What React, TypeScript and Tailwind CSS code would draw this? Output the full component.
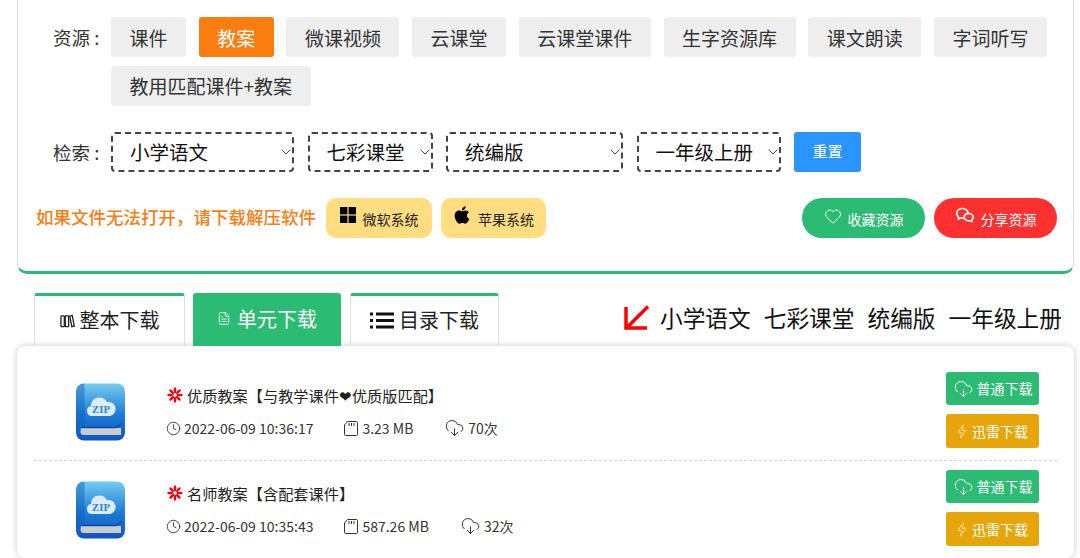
import { ChevronDown, Clock, CloudDownload, FileText, Heart } from "lucide-react"
import { FaApple } from "react-icons/fa"
import { RiWechatLine } from "react-icons/ri"

const sources = ["课件", "教案", "微课视频", "云课堂", "云课堂课件", "生字资源库", "课文朗读", "字词听写", "教用匹配课件+教案"]

const filters = [
  { value: "小学语文", width: "w-[183px]" },
  { value: "七彩课堂", width: "w-[125px]" },
  { value: "统编版", width: "w-[177px]" },
  { value: "一年级上册", width: "w-[144px]" },
]

const files = [
  { title: "优质教案【与教学课件❤\uFE0E优质版匹配】", time: "2022-06-09 10:36:17", size: "3.23 MB", count: "70次" },
  { title: "名师教案【含配套课件】", time: "2022-06-09 10:35:43", size: "587.26 MB", count: "32次" },
]

function WindowsIcon() {
  return (
    <svg viewBox="0 0 16 16" className="-mt-[5px] h-4 w-4 fill-black">
      <rect x="0" y="0" width="7.4" height="7.4" />
      <rect x="8.6" y="0" width="7.4" height="7.4" />
      <rect x="0" y="8.6" width="7.4" height="7.4" />
      <rect x="8.6" y="8.6" width="7.4" height="7.4" />
    </svg>
  )
}

function BooksIcon() {
  return (
    <svg viewBox="0 0 16 16" className="h-[15px] w-[15px] fill-none stroke-[#222]" strokeWidth="1.4">
      <rect x="1" y="3" width="3.6" height="11.5" rx="0.6" />
      <rect x="5.6" y="3" width="3.6" height="11.5" rx="0.6" />
      <path d="M10.4 3.4l2.6-.8 2.2 11.2-2.6.7z" />
    </svg>
  )
}

function ListIcon() {
  return (
    <svg viewBox="0 0 24 17" className="h-[17px] w-[24px] fill-[#111]">
      <rect x="0" y="0.5" width="3" height="3" />
      <rect x="0" y="7" width="3" height="3" />
      <rect x="0" y="13.5" width="3" height="3" />
      <rect x="6" y="0.5" width="18" height="3" />
      <rect x="6" y="7" width="18" height="3" />
      <rect x="6" y="13.5" width="18" height="3" />
    </svg>
  )
}

function SdCardIcon() {
  return (
    <svg viewBox="0 0 14 15" className="h-[15px] w-[14px] fill-none stroke-[#333]" strokeWidth="1">
      <path d="M3.5 .5h9a1 1 0 0 1 1 1v12a1 1 0 0 1-1 1h-11a1 1 0 0 1-1-1V4z" />
      <path d="M5 2v3M7.5 2v3M10 2v3" />
    </svg>
  )
}

function BoltIcon() {
  return (
    <svg viewBox="0 0 10 15" className="h-[15px] w-[10px] fill-none stroke-[#f6dc9b]" strokeWidth="1">
      <path d="M6.2 .8L1 8.4h3.6l-1 5.8L9 6.200H5.400z" strokeLinejoin="round" />
    </svg>
  )
}

function RedFlower() {
  return (
    <svg viewBox="0 0 16 16" className="h-4 w-4 shrink-0 fill-[#f5000f]">
      {[0, 45, 90, 135, 180, 225, 270, 315].map((deg) => (
        <ellipse key={deg} cx="8" cy="3.3" rx="1.3" ry="3.1" transform={`rotate(${deg} 8 8)`} />
      ))}
    </svg>
  )
}

function ZipBook() {
  return (
    <svg viewBox="0 0 49 58" className="h-[58px] w-[49px] shrink-0">
      <defs>
        <linearGradient id="zipCover" x1="0" y1="0" x2="0" y2="1">
          <stop offset="0" stopColor="#74ccf0" />
          <stop offset="0.55" stopColor="#1c7ad6" />
          <stop offset="1" stopColor="#0f56c0" />
        </linearGradient>
      </defs>
      <rect x="0" y="0.5" width="49" height="57" rx="8" fill="url(#zipCover)" />
      <path d="M8.5 .5h-.5a8 8 0 0 0-8 8v38h8.5z" fill="#0d5fb8" opacity="0.45" />
      <path d="M6 45h39v7H8c-2.5 0-3.5-1-3.5-3.5s.5-3.5 1.5-3.5z" fill="#c9cbce" />
      <path d="M6 44.5h34l6-4" fill="none" stroke="#0b49a8" strokeWidth="1.5" />
      <path d="M16 33a5 5 0 0 1-1-9.900 8.500 8.500 0 0 1 16-4 6.500 6.500 0 0 1 3 13.900z" fill="#dcecf8" />
      <text x="25" y="30" textAnchor="middle" fill="#2f86d8" fontSize="11" fontWeight="700" fontFamily="'Liberation Serif', serif">
        ZIP
      </text>
    </svg>
  )
}

function FileRow({ title, time, size, count }: (typeof files)[number]) {
  return (
    <div className="flex items-center border-b border-dashed border-[#d4d4d4] pb-[12px] pt-[9px] last:border-b-0">
      <div className="ml-[42px] mr-[41px] pt-[3px]">
        <ZipBook />
      </div>
      <div className="flex-1 pt-[3px] text-[#222]">
        <div className="flex items-center gap-[4px] pl-[1px] text-[15.2px] leading-[20px]">
          <RedFlower />
          <span>{title}</span>
        </div>
        <div className="mt-[13px] flex items-center gap-[31px] text-[14px] leading-[20px] text-[#333]">
          <span className="flex items-center gap-[3px]">
            <Clock className="h-[15px] w-[15px]" strokeWidth={1.4} />
            {time}
          </span>
          <span className="flex items-center gap-[4px]">
            <SdCardIcon />
            {size}
          </span>
          <span className="flex items-center gap-[3px]">
            <CloudDownload className="h-[20px] w-[21px]" strokeWidth={1.2} />
            {count}
          </span>
        </div>
      </div>
      <div className="mr-[18px] flex w-[93px] flex-col gap-[9px] text-[14px] text-white">
        <button type="button" className="flex h-[33px] items-center justify-center gap-[3px] rounded-[3px] bg-[#2bbb73]">
          <CloudDownload className="h-[20px] w-[21px]" strokeWidth={1.2} />
          普通下载
        </button>
        <button type="button" className="flex h-[34px] items-center justify-center gap-[5px] rounded-[3px] bg-[#e6a609]">
          <BoltIcon />
          迅雷下载
        </button>
      </div>
    </div>
  )
}

export default function App() {
  return (
    <div className="h-[558px] overflow-hidden bg-white font-['Noto_Sans_CJK_SC','Noto_Sans',sans-serif] text-[#222]">
      <section className="ml-[17px] h-[274px] w-[1057px] rounded-b-[10px] border-x border-b-[3px] border-x-[#dcdcdc] border-b-[#2bbb73] pt-[17px]">
        <div className="flex items-start pl-[35px]">
          <span className="w-[58px] shrink-0 text-[18.5px] leading-[40px] text-[#333]">资源 :</span>
          <div className="flex flex-wrap gap-x-[12.7px] gap-y-[8.5px]">
            {sources.map((item) => (
              <button
                type="button"
                key={item}
                className={`h-[40px] rounded-[3px] px-[18.5px] text-[19px] leading-none ${
                  item === "教案" ? "bg-[#fa7d10] text-white" : "bg-[#eeeeee] text-[#333]"
                }`}
              >
                {item}
              </button>
            ))}
          </div>
        </div>

        <div className="mt-[26px] flex items-center pl-[35px]">
          <span className="w-[58px] shrink-0 text-[18.5px] leading-[40px] text-[#333]">检索 :</span>
          <div className="flex items-center gap-[13.5px]">
            {filters.map((f) => (
              <div
                key={f.value}
                className={`flex h-[40px] items-center justify-between rounded-[4px] border-2 border-dashed border-[#444] pl-[17px] text-[19.5px] text-[#111] ${f.width}`}
              >
                {f.value}
                <ChevronDown className="-mr-[2px] h-4 w-4 text-[#444]" strokeWidth={1.5} />
              </div>
            ))}
            <button type="button" className="h-[40px] w-[67px] rounded-[3px] bg-[#2a94ff] text-[15px] text-white">
              重置
            </button>
          </div>
        </div>

        <div className="mt-[26px] flex items-center pl-[18px] pr-[16px]">
          <span className="text-[17.5px] font-medium text-[#fa7d10]">如果文件无法打开，请下载解压软件</span>
          <button type="button" className="ml-[10px] flex h-[40px] w-[106px] items-center justify-center gap-[7px] rounded-[10px] bg-[#ffdd80] text-[14px]">
            <WindowsIcon />
            <span className="pt-[3px]">微软系统</span>
          </button>
          <button type="button" className="ml-[9px] flex h-[40px] w-[105px] items-center justify-center gap-[7px] rounded-[10px] bg-[#ffdd80] text-[14px]">
            <FaApple className="-mt-[5px] h-[20px] w-[18px] text-black" />
            <span className="pt-[3px]">苹果系统</span>
          </button>
          <button type="button" className="ml-auto flex h-[40px] w-[123px] items-center justify-center gap-[6px] rounded-full bg-[#2bbb73] text-[14px] text-white">
            <Heart className="-mt-[4px] h-[18px] w-[18px]" strokeWidth={1.3} />
            <span className="pt-[3px]">收藏资源</span>
          </button>
          <button type="button" className="ml-[9px] flex h-[40px] w-[123px] items-center justify-center gap-[6px] rounded-full bg-[#ff3030] text-[14px] text-white">
            <RiWechatLine className="-mt-[5px] h-[20px] w-[20px]" />
            <span className="pt-[3px]">分享资源</span>
          </button>
        </div>
      </section>

      <div className="mt-[19px] flex items-end justify-between pl-[34px] pr-[18px]">
        <div className="flex gap-[8px] text-[20px]">
          <div className="flex h-[53px] w-[151px] items-center justify-center gap-[5px] rounded-t-[3px] border-x border-t-[3px] border-x-[#dedede] border-t-[#2bbb73] pb-[2px]">
            <BooksIcon />
            整本下载
          </div>
          <div className="flex h-[53px] w-[148px] items-center justify-center gap-[6px] rounded-t-[3px] bg-[#2bbb73] pb-[2px] text-white">
            <FileText className="h-[15px] w-[14px]" strokeWidth={1.4} />
            单元下载
          </div>
          <div className="ml-[1px] flex h-[53px] w-[149px] items-center justify-center gap-[5px] rounded-t-[3px] border-x border-t-[3px] border-x-[#dedede] border-t-[#2bbb73] pb-[2px]">
            <ListIcon />
            目录下载
          </div>
        </div>
        <div className="flex items-center gap-[13px] pb-[11px] text-[22.7px] text-[#111]">
          <svg viewBox="0 0 26 25" className="mr-[-3px] h-[25px] w-[26px] fill-none stroke-[#ff0000]" strokeWidth="3.5">
            <path d="M24 1.5L3 22.5M2 2v21h21" />
          </svg>
          <span>小学语文</span>
          <span>七彩课堂</span>
          <span>统编版</span>
          <span>一年级上册</span>
        </div>
      </div>

      <section className="ml-[17px] w-[1057px] rounded-lg bg-white px-[17px] pt-[17px] shadow-[0_0_6px_rgba(0,0,0,0.22)]">
        {files.map((file) => (
          <FileRow key={file.time} {...file} />
        ))}
      </section>
    </div>
  )
}
